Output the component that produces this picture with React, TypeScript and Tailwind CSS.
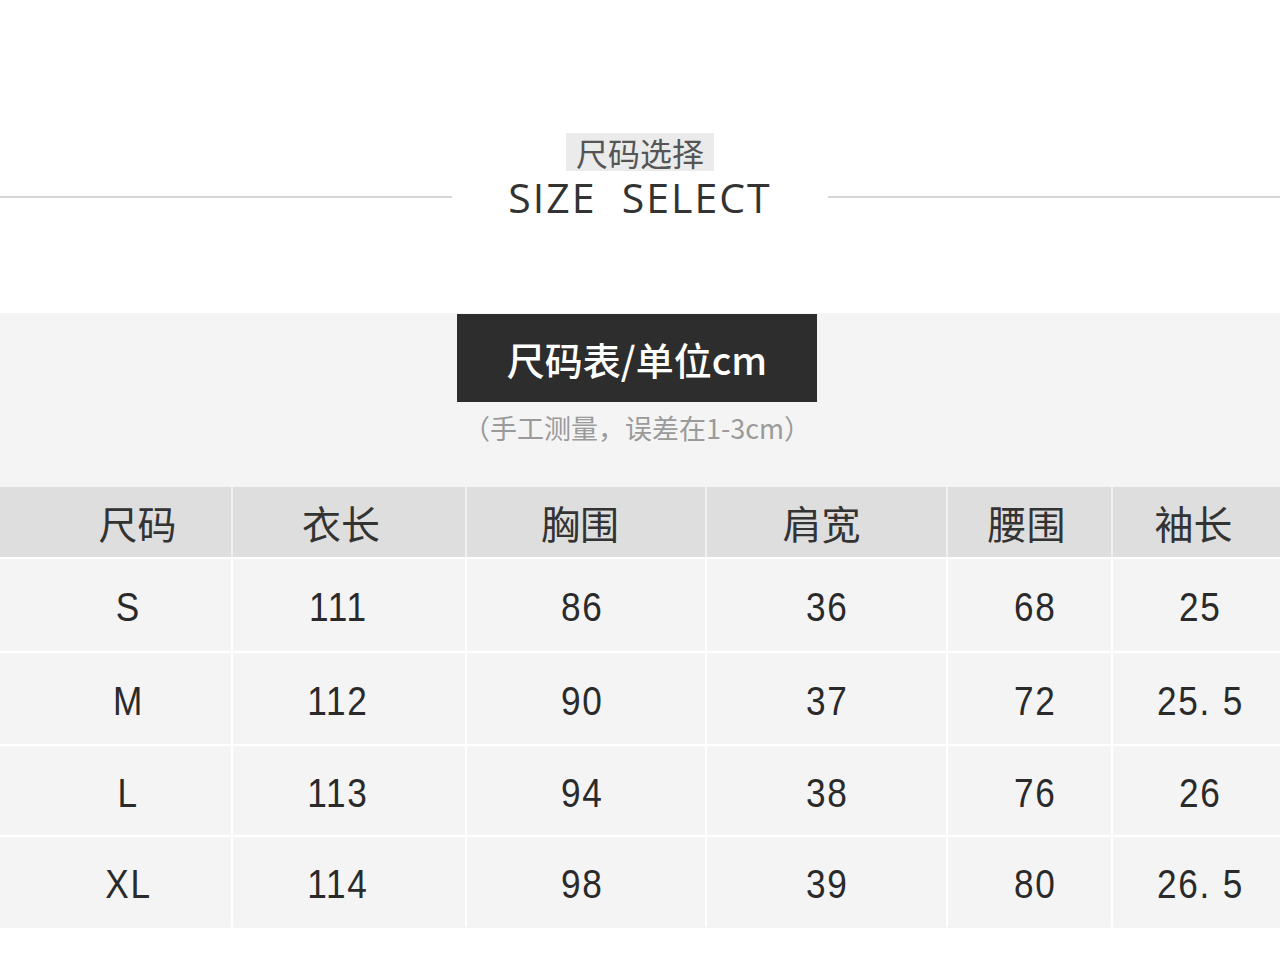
import React from "react";

const cols = ["尺码", "衣长", "胸围", "肩宽", "腰围", "袖长"];
const headShift = ["pl-[44px]", "pr-[16px]", "pr-[12px]", "pr-[10px]", "pr-[6px]", "pr-[6px]"];
const dataShift = ["pl-[26px]", "pr-[22px]", "pr-[8px]", "pl-[2px]", "pl-[12px]", "pl-[8px]"];
const rows = [
  { h: "h-[94px]", v: ["S", "111", "86", "36", "68", "25"] },
  { h: "h-[93px]", v: ["M", "112", "90", "37", "72", "25. 5"] },
  { h: "h-[91px]", v: ["L", "113", "94", "38", "76", "26"] },
  { h: "h-[92px]", v: ["XL", "114", "98", "39", "80", "26. 5"] },
];

const cjk = { fontFamily: '"Noto Sans CJK SC", "Noto Sans", sans-serif' };
const num = { fontFamily: '"Liberation Sans", Arial, sans-serif' };

export default function App() {
  return (
    <div className="w-[1280px] h-[956px] bg-white overflow-hidden" style={cjk}>
      {/* top heading */}
      <div className="h-[313px] pt-[133px] flex flex-col items-center">
        <div className="h-[38px] px-[10px] bg-[#ebebeb] flex items-center text-[32px] leading-none text-[#555]">
          尺码选择
        </div>
        <div className="w-full flex items-center mt-[6px]">
          <div className="flex-1 h-[2px] bg-[#d6d6d6]" />
          <div
            className="w-[376px] text-center text-[41px] leading-[40px] tracking-[2px] text-[#333]"
            style={{ fontFamily: '"Open Sans", sans-serif' }}
          >
            SIZE&nbsp; SELECT
          </div>
          <div className="flex-1 h-[2px] bg-[#d6d6d6]" />
        </div>
      </div>

      {/* grey section */}
      <div className="h-[615px] bg-[#f4f4f4] flex flex-col">
        <div className="flex justify-center">
          <div className="w-[360px] h-[88px] mt-[1px] mr-[6px] bg-[#2d2d2d] flex items-center justify-center text-white text-[38px] font-medium leading-none pt-[2px]">
            尺码表/单位cm
          </div>
        </div>
        <div className="h-[85px] pt-[10px] text-center text-[27px] leading-[32px] text-[#9a9a9a] mr-[6px]">
          （手工测量，误差在1-3cm）
        </div>
        <div className="grid grid-cols-[231px_234px_240px_241px_165px_169px] h-[70px] bg-[#dedede]">
          {cols.map((c, i) => (
            <div
              key={c}
              className={`flex items-center justify-center text-[39px] leading-none text-[#333] ${
                i > 0 ? "border-l-2 border-[#f0f0f0]" : ""
              } ${headShift[i]}`}
            >
              {c}
            </div>
          ))}
        </div>
        {rows.map((r) => (
          <div
            key={r.v[0]}
            className={`grid grid-cols-[231px_234px_240px_241px_165px_169px] border-t-2 border-white ${r.h}`}
          >
            {r.v.map((v, i) => (
              <div
                key={i}
                className={`flex items-center justify-center pt-[4px] ${
                  i > 0 ? "border-l-2 border-white" : ""
                } ${dataShift[i]}`}
              >
                <span
                  className="inline-block scale-x-[0.88] text-[40px] tracking-[2px] leading-none text-[#2a2a2a] whitespace-pre"
                  style={num}
                >
                  {v}
                </span>
              </div>
            ))}
          </div>
        ))}
      </div>
    </div>
  );
}
